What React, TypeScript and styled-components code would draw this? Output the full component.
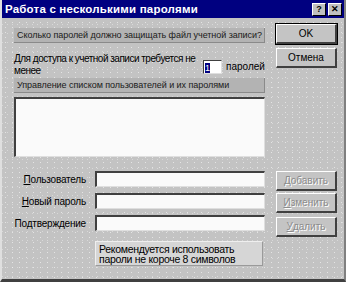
import React from "react";
import styled, { createGlobalStyle } from "styled-components";

const GlobalStyle = createGlobalStyle`
  html, body {
    margin: 0;
    padding: 0;
    background: #c0c0c0;
  }
  body {
    font-family: "Liberation Sans", Arial, sans-serif;
    font-size: 10px;
    color: #000;
  }
`;

function App() {
  return (
    <>
      <GlobalStyle />
      <Window>
        <TitleBar>
          <TitleText>Работа с несколькими паролями</TitleText>
          <TitleButtons>
            <CaptionButton>?</CaptionButton>
            <CaptionButton>✕</CaptionButton>
          </TitleButtons>
        </TitleBar>

        <Body>
          <Band $top={4}>Сколько паролей должно защищать файл учетной записи?</Band>
          <Button $default>OK</Button>

          <CountRow>
            <CountText>Для доступа к учетной записи требуется не менее</CountText>
            <Spinner>
              <Selected>1</Selected>
            </Spinner>
            <CountUnit>паролей</CountUnit>
          </CountRow>
          <Button>Отмена</Button>

          <Band>Управление списком пользователей и их паролями</Band>
          <Empty />

          <ListBox />
          <Empty />

          <FieldRow>
            <Label>
              <u>П</u>ользователь
            </Label>
            <Input />
          </FieldRow>
          <Button $disabled>
            <u>Д</u>обавить
          </Button>

          <FieldRow>
            <Label>
              <u>Н</u>овый пароль
            </Label>
            <Input />
          </FieldRow>
          <Button $disabled>
            <u>И</u>зменить
          </Button>

          <FieldRow>
            <Label>Подтверждение</Label>
            <Input />
          </FieldRow>
          <Button $disabled $top={2}>
            <u>У</u>далить
          </Button>

          <Hint>Рекомендуется использовать пароли не короче 8 символов</Hint>
          <Empty />
        </Body>
      </Window>
    </>
  );
}

export default App;

const Window = styled.div`
  width: 346px;
  height: 282px;
  box-sizing: border-box;
  display: flex;
  flex-direction: column;
  border-left: 2px solid #dfdfdf;
  border-right: 2px solid #808080;
  border-bottom: 3px solid #404040;
  background-color: #c3c3c3;
  background-image: radial-gradient(circle, rgba(255, 255, 255, 0.55) 0.7px, transparent 0.9px),
    radial-gradient(circle, rgba(255, 255, 255, 0.35) 0.7px, transparent 0.9px);
  background-size: 7px 5px, 5px 9px;
  background-position: 0 0, 3px 2px;
`;

const TitleBar = styled.div`
  height: 18px;
  background: #000080;
  display: flex;
  align-items: center;
  justify-content: space-between;
  padding: 0 2px 0 3px;
`;

const TitleText = styled.span`
  color: #fff;
  font-weight: bold;
  font-size: 11.5px;
  letter-spacing: 0.2px;
`;

const TitleButtons = styled.div`
  display: flex;
  gap: 2px;
`;

const CaptionButton = styled.div`
  width: 12px;
  height: 11px;
  background: #c0c0c0;
  border-top: 1px solid #fff;
  border-left: 1px solid #fff;
  border-right: 1px solid #000;
  border-bottom: 1px solid #000;
  font-size: 9px;
  font-weight: bold;
  line-height: 11px;
  text-align: center;
  color: #000;
`;

const Body = styled.div`
  display: grid;
  grid-template-columns: 251px 61px;
  grid-template-rows: 24px 30px 19px 74px 22px 22px 26px 25px;
  column-gap: 11px;
  align-items: start;
  padding: 6px 0 0 12px;
`;

const Empty = styled.div``;

const Band = styled.div<{ $top?: number }>`
  margin-top: ${(p) => p.$top || 0}px;
  height: 15px;
  box-sizing: border-box;
  padding: 1px 3px;
  background: #b3b3b3;
  border-right: 1px solid #8a8a8a;
  border-bottom: 1px solid #8a8a8a;
  font-size: 9px;
  line-height: 13px;
  letter-spacing: -0.05px;
  color: #1a1a1a;
  white-space: nowrap;
`;

const Button = styled.div<{ $default?: boolean; $disabled?: boolean; $top?: number }>`
  margin-top: ${(p) => p.$top || 0}px;
  height: 20px;
  box-sizing: border-box;
  display: flex;
  align-items: center;
  justify-content: center;
  background: #c4c4c4;
  border-top: 1px solid #fff;
  border-left: 1px solid #fff;
  border-right: 2px solid #404040;
  border-bottom: 2px solid #404040;
  outline: ${(p) => (p.$default ? "1px solid #000" : "none")};
  font-size: 10px;
  color: ${(p) => (p.$disabled ? "#8c8c8c" : "#000")};
  text-shadow: ${(p) => (p.$disabled ? "1px 1px 0 #fff" : "none")};
`;

const CountRow = styled.div`
  margin-top: 5px;
  display: flex;
  align-items: flex-start;
`;

const CountText = styled.div`
  width: 185px;
  font-size: 10px;
  line-height: 12px;
  letter-spacing: -0.5px;
`;

const Spinner = styled.div`
  margin: 7px 0 0 4px;
  width: 19px;
  height: 14px;
  box-sizing: border-box;
  background: #fff;
  border-top: 1px solid #404040;
  border-left: 1px solid #404040;
  border-right: 1px solid #dfdfdf;
  border-bottom: 1px solid #dfdfdf;
  padding: 1px;
`;

const Selected = styled.span`
  display: inline-block;
  width: 5px;
  height: 10px;
  background: #000080;
  color: #fff;
  font-size: 9px;
  line-height: 10px;
  text-align: center;
`;

const CountUnit = styled.span`
  margin: 8px 0 0 4px;
  font-size: 10px;
`;

const ListBox = styled.div`
  height: 60px;
  box-sizing: border-box;
  background: #fafafa;
  border-top: 2px solid #404040;
  border-left: 2px solid #404040;
  border-right: 1px solid #dfdfdf;
  border-bottom: 1px solid #dfdfdf;
`;

const FieldRow = styled.div`
  display: flex;
  align-items: center;
  gap: 9px;
`;

const Label = styled.div`
  width: 72px;
  text-align: right;
  font-size: 10px;
  letter-spacing: -0.2px;
  white-space: nowrap;
`;

const Input = styled.div`
  width: 170px;
  height: 16px;
  box-sizing: border-box;
  background: #fafafa;
  border-top: 2px solid #404040;
  border-left: 2px solid #404040;
  border-right: 1px solid #dfdfdf;
  border-bottom: 1px solid #dfdfdf;
`;

const Hint = styled.div`
  margin-left: 81px;
  width: 168px;
  height: 25px;
  box-sizing: border-box;
  padding: 2px 3px;
  background: #d6d6d6;
  border-top: 1px solid #efefef;
  border-left: 1px solid #efefef;
  border-right: 1px solid #9a9a9a;
  border-bottom: 1px solid #9a9a9a;
  font-size: 10.5px;
  line-height: 10px;
  letter-spacing: -0.3px;
`;
